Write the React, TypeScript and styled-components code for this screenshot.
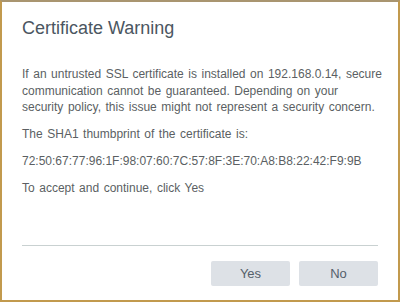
import React from 'react';
import styled, { createGlobalStyle } from 'styled-components';

const GlobalStyle = createGlobalStyle`
  html, body {
    margin: 0;
    padding: 0;
    background: #ffffff;
  }
  * {
    box-sizing: border-box;
  }
`;

const Dialog = styled.div`
  background: #ffffff;
  border: 2px solid #c29a4e;
  border-top-color: #a99570;
  display: flex;
  flex-direction: column;
  font-family: 'Liberation Sans', Arial, sans-serif;
  height: 302px;
  padding: 0 20px 0 20px;
  width: 400px;
`;

const Title = styled.h1`
  color: #4b5661;
  font-size: 18px;
  font-weight: normal;
  line-height: 22px;
  margin: 15px 0 0 0;
`;

const Body = styled.div`
  color: #5b5f63;
  flex: 1;
  font-size: 12px;
  line-height: 16.5px;
  margin-right: -4px;
  padding-top: 27px;
  word-spacing: 1.2px;
`;

const Paragraph = styled.p`
  margin: 0 0 10.5px 0;
`;

const Footer = styled.div`
  border-top: 1px solid #c9d1d1;
  display: flex;
  gap: 9px;
  justify-content: flex-end;
  margin-bottom: 14px;
  padding-top: 15px;
`;

const ActionButton = styled.button`
  background: #dde1e6;
  border: none;
  border-radius: 2px;
  color: #55606b;
  cursor: pointer;
  font-family: 'Liberation Sans', Arial, sans-serif;
  font-size: 13px;
  height: 25px;
  padding: 0;
  width: 79px;
`;

const App: React.FC = () => {
  const thumbprint = '72:50:67:77:96:1F:98:07:60:7C:57:8F:3E:70:A8:B8:22:42:F9:9B';

  return (
    <>
      <GlobalStyle />
      <Dialog>
        <Title>Certificate Warning</Title>
        <Body>
          <Paragraph>
            If an untrusted SSL certificate is installed on 192.168.0.14, secure communication cannot be
            guaranteed. Depending on your security policy, this issue might not represent a security
            concern.
          </Paragraph>
          <Paragraph>The SHA1 thumbprint of the certificate is:</Paragraph>
          <Paragraph>{thumbprint}</Paragraph>
          <Paragraph>To accept and continue, click Yes</Paragraph>
        </Body>
        <Footer>
          <ActionButton>Yes</ActionButton>
          <ActionButton>No</ActionButton>
        </Footer>
      </Dialog>
    </>
  );
};

export default App;
